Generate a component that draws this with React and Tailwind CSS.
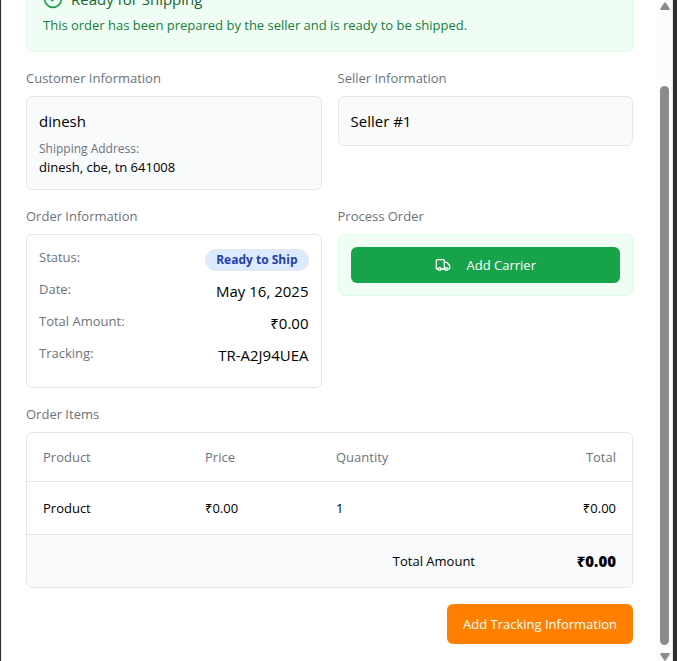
import { CircleCheck, Truck } from "lucide-react";

const details = [
  { label: "Date:", value: "May 16, 2025" },
  { label: "Total Amount:", value: "₹0.00" },
  { label: "Tracking:", value: "TR-A2J94UEA" },
];

function Section({ title, children }) {
  return (
    <section>
      <h3 className="mb-2 text-[13px] leading-5 text-[#6b7280]">{title}</h3>
      {children}
    </section>
  );
}

function ScrollRail() {
  return (
    <div aria-hidden="true" className="flex w-[15px] shrink-0 flex-col items-center bg-[#fcfcfc] pt-0.5">
      <svg viewBox="0 0 10 8" className="h-2 w-2.5 fill-[#8b8b8b]">
        <path d="M4.2.8Q5-.4 5.8.8L9.6 6.6Q10 8 8.6 8H1.4Q0 8 .4 6.6Z" />
      </svg>
      <div className="mt-[76px] mb-2 w-[9px] flex-1 rounded-full bg-[#8b8b8b]" />
      <svg viewBox="0 0 10 8" className="h-2 w-2.5 fill-[#8b8b8b]">
        <path d="M4.2 7.2Q5 8.4 5.8 7.2L9.6 1.4Q10 0 8.6 0H1.4Q0 0 .4 1.4Z" />
      </svg>
    </div>
  );
}

export default function App() {
  return (
    <div className="flex h-screen overflow-hidden bg-[#2f2f2f] pr-1 pl-px font-['Open_Sans','Noto_Sans',sans-serif] text-[13px] leading-5 text-black">
      <div className="flex min-w-0 flex-1 border-x border-gray-200 bg-white">
        <main className="min-w-0 flex-1 overflow-hidden px-6">
          <div className="-mt-[30px] flex flex-col gap-4">
            <div className="rounded-md border border-green-100 bg-green-50 p-4">
              <div className="mb-1 flex items-center gap-2">
                <CircleCheck className="size-5 text-[#16a34a]" />
                <h2 className="text-[15px] leading-6 text-[#166534]">Ready for Shipping</h2>
              </div>
              <p className="text-[#15803d]">
                This order has been prepared by the seller and is ready to be shipped.
              </p>
            </div>

            <div className="grid grid-cols-2 gap-4">
              <Section title="Customer Information">
                <div className="rounded-md border border-gray-200 bg-gray-50 p-3">
                  <p className="text-[15px] leading-6">dinesh</p>
                  <p className="mt-2 text-[12px] leading-4 text-[#6b7280]">Shipping Address:</p>
                  <p>dinesh, cbe, tn 641008</p>
                </div>
              </Section>
              <Section title="Seller Information">
                <div className="rounded-md border border-gray-200 bg-gray-50 p-3">
                  <p className="text-[15px] leading-6">Seller #1</p>
                </div>
              </Section>
              <Section title="Order Information">
                <dl className="rounded-md border border-gray-200 p-3">
                  <div className="mb-2 flex h-6 justify-between">
                    <dt className="text-[#6b7280]">Status:</dt>
                    <dd className="self-end rounded-full border border-gray-200 bg-blue-100 px-2.5 py-0.5 text-[12px] leading-4 font-bold text-[#1e40af]">
                      Ready to Ship
                    </dd>
                  </div>
                  {details.map(({ label, value }) => (
                    <div key={label} className="mb-2 flex justify-between">
                      <dt className="text-[#6b7280]">{label}</dt>
                      <dd className="text-[15px] leading-6">{value}</dd>
                    </div>
                  ))}
                </dl>
              </Section>
              <Section title="Process Order">
                <div className="rounded-md border border-green-100 bg-green-50 p-3">
                  <button
                    type="button"
                    className="flex h-9 w-full items-center justify-center gap-4 rounded-md bg-[#16a34a] text-white"
                  >
                    <Truck className="size-4" />
                    Add Carrier
                  </button>
                </div>
              </Section>
            </div>

            <Section title="Order Items">
              <div className="overflow-hidden rounded-md border border-gray-200">
                <table className="w-full">
                  <thead>
                    <tr className="h-12 border-b border-gray-200 text-left text-[#6b7280]">
                      <th className="w-[162px] px-4 font-normal">Product</th>
                      <th className="w-[131px] px-4 font-normal">Price</th>
                      <th className="w-[171px] px-4 font-normal">Quantity</th>
                      <th className="w-[141px] px-4 text-right font-normal">Total</th>
                    </tr>
                  </thead>
                  <tbody>
                    <tr className="border-b border-gray-200">
                      <td className="p-4">Product</td>
                      <td className="p-4">₹0.00</td>
                      <td className="p-4">1</td>
                      <td className="p-4 text-right">₹0.00</td>
                    </tr>
                  </tbody>
                  <tfoot>
                    <tr className="bg-gray-50">
                      <td colSpan={3} className="p-4 text-right">Total Amount</td>
                      <td className="p-4 text-right text-[15px] leading-5 font-extrabold">₹0.00</td>
                    </tr>
                  </tfoot>
                </table>
              </div>
            </Section>

            <div className="flex justify-end">
              <button type="button" className="h-10 rounded-md bg-[#ff8000] px-4 text-white">
                Add Tracking Information
              </button>
            </div>
          </div>
        </main>
        <ScrollRail />
      </div>
    </div>
  );
}
